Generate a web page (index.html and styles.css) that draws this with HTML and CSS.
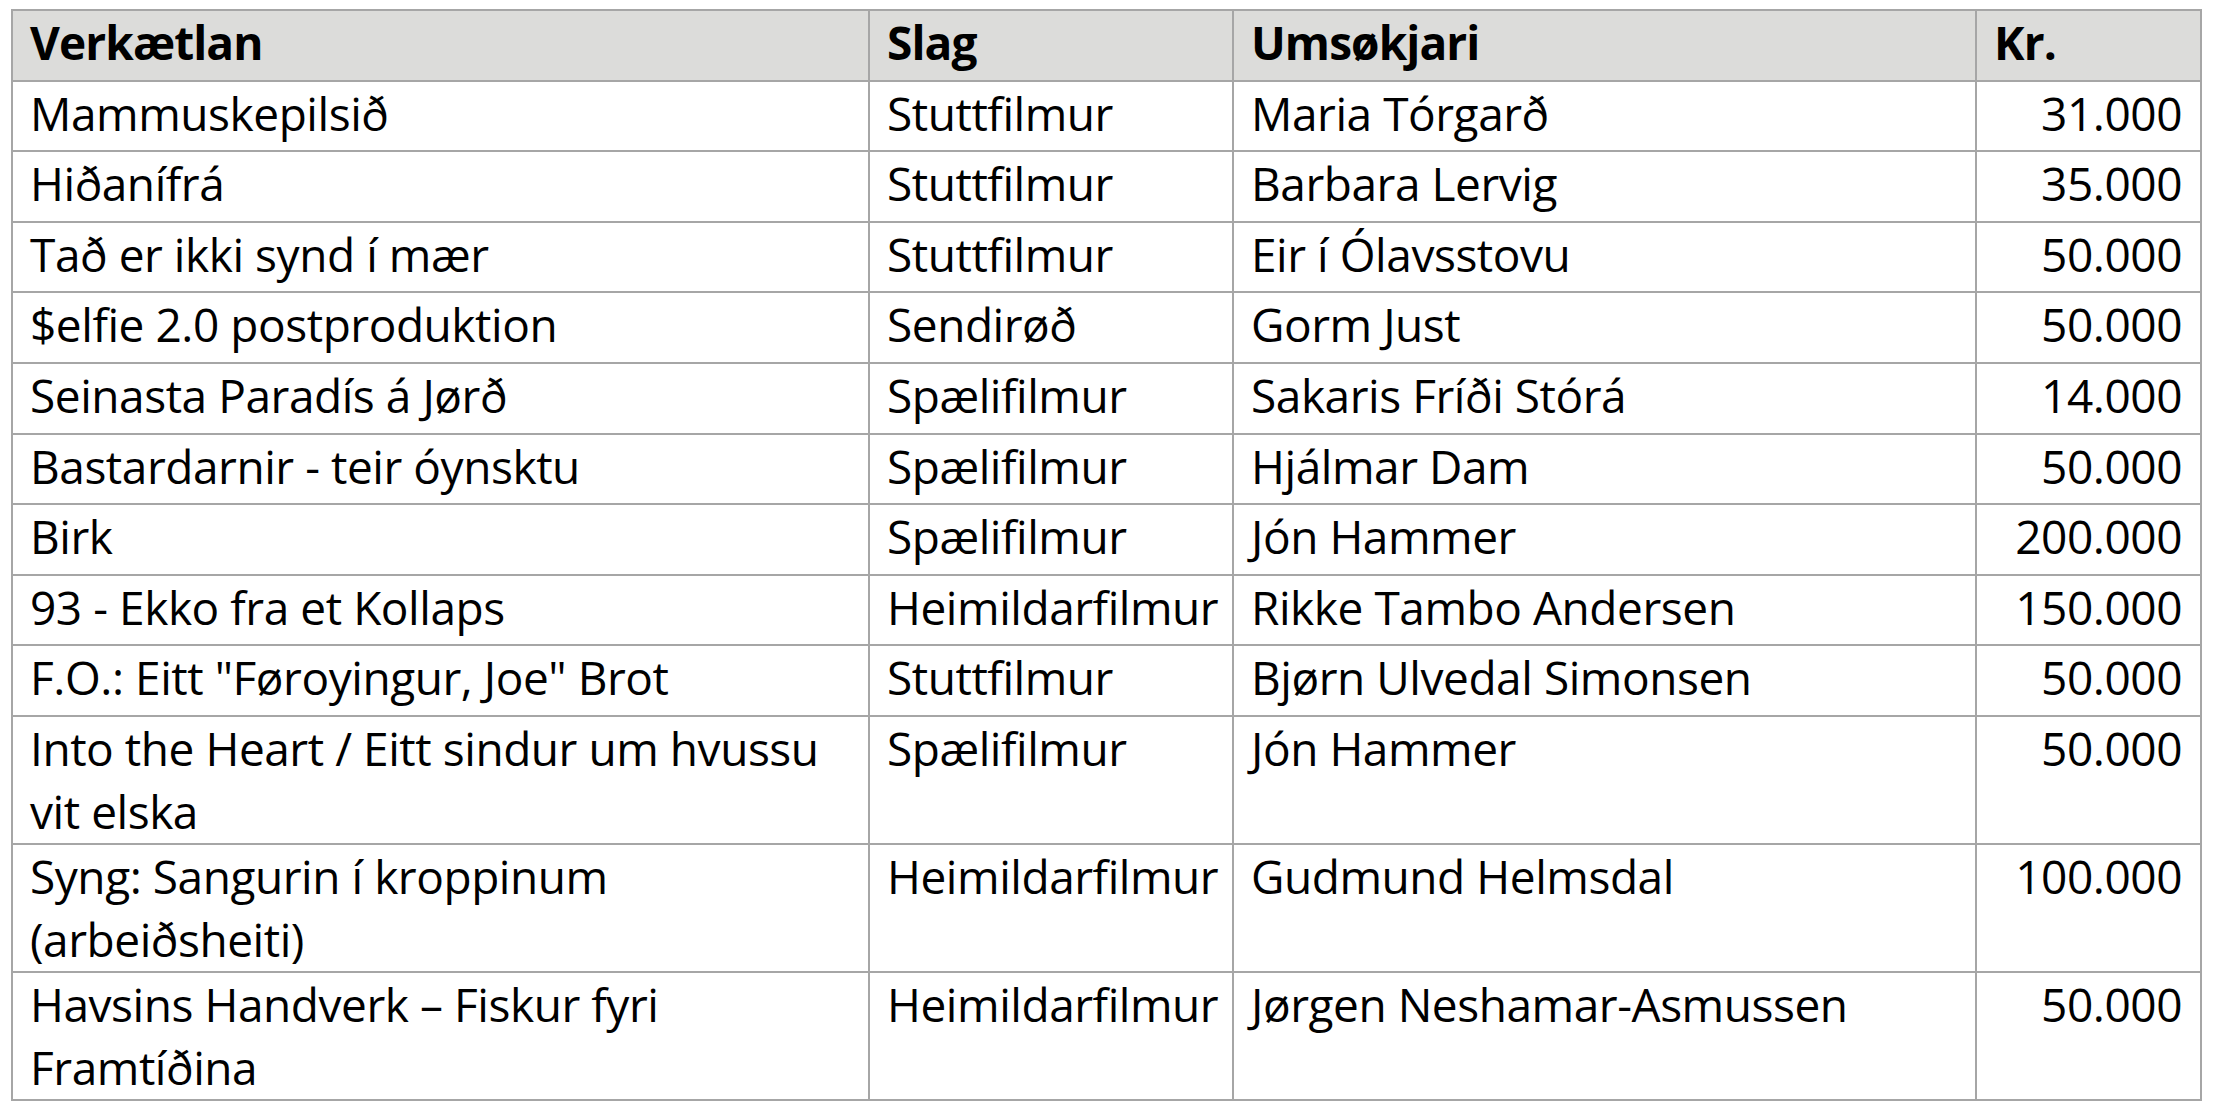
FILE: index.html
```html
<!DOCTYPE html>
<html lang="fo">
<head>
<meta charset="utf-8">
<title>Verkætlanir</title>
<link rel="stylesheet" href="styles.css">
</head>
<body>
<table class="grants">
  <colgroup>
    <col class="c-project">
    <col class="c-type">
    <col class="c-applicant">
    <col class="c-amount">
  </colgroup>
  <thead>
    <tr>
      <th>Verkætlan</th>
      <th>Slag</th>
      <th>Umsøkjari</th>
      <th>Kr.</th>
    </tr>
  </thead>
  <tbody>
    <tr><td>Mammuskepilsið</td><td class="type">Stuttfilmur</td><td>Maria Tórgarð</td><td class="num">31.000</td></tr>
    <tr><td>Hiðanífrá</td><td class="type">Stuttfilmur</td><td>Barbara Lervig</td><td class="num">35.000</td></tr>
    <tr><td>Tað er ikki synd í mær</td><td class="type">Stuttfilmur</td><td>Eir í Ólavsstovu</td><td class="num">50.000</td></tr>
    <tr><td>$elfie 2.0 postproduktion</td><td class="type">Sendirøð</td><td>Gorm Just</td><td class="num">50.000</td></tr>
    <tr><td>Seinasta Paradís á Jørð</td><td class="type">Spælifilmur</td><td>Sakaris Fríði Stórá</td><td class="num">14.000</td></tr>
    <tr><td>Bastardarnir - teir óynsktu</td><td class="type">Spælifilmur</td><td>Hjálmar Dam</td><td class="num">50.000</td></tr>
    <tr><td>Birk</td><td class="type">Spælifilmur</td><td>Jón Hammer</td><td class="num">200.000</td></tr>
    <tr><td>93 - Ekko fra et Kollaps</td><td class="type">Heimildarfilmur</td><td>Rikke Tambo Andersen</td><td class="num">150.000</td></tr>
    <tr><td>F.O.: Eitt "Føroyingur, Joe" Brot</td><td class="type">Stuttfilmur</td><td>Bjørn Ulvedal Simonsen</td><td class="num">50.000</td></tr>
    <tr><td>Into the Heart / Eitt sindur um hvussu vit elska</td><td class="type">Spælifilmur</td><td>Jón Hammer</td><td class="num">50.000</td></tr>
    <tr><td>Syng: Sangurin í kroppinum (arbeiðsheiti)</td><td class="type">Heimildarfilmur</td><td>Gudmund Helmsdal</td><td class="num">100.000</td></tr>
    <tr><td>Havsins Handverk – Fiskur fyri Framtíðina</td><td class="type">Heimildarfilmur</td><td>Jørgen Neshamar-Asmussen</td><td class="num">50.000</td></tr>
  </tbody>
</table>
</body>
</html>
```
FILE: styles.css
```css
html, body {
  margin: 0;
  padding: 0;
  background: #ffffff;
}

body {
  font-family: "Open Sans", "Noto Sans", sans-serif;
  color: #000000;
}

.grants {
  margin: 9px 0 0 11px;
  border-collapse: collapse;
  table-layout: fixed;
  width: 2191px;
  font-size: 46px;
  line-height: 63px;
  letter-spacing: -0.45px;
}

.c-project { width: 857px; }
.c-type { width: 364px; }
.c-applicant { width: 743px; }
.c-amount { width: 225px; }

.grants th,
.grants td {
  border: 2px solid #a6a6a6;
  padding: 0 16px 0 17px;
  height: 68.6px;
  vertical-align: top;
  text-align: left;
  box-sizing: content-box;
}

.grants th {
  background: #dcdcda;
  font-weight: 700;
  letter-spacing: -0.9px;
}

.grants td.type {
  white-space: nowrap;
}

.grants td.num {
  text-align: right;
  padding-right: 18px;
}
```
